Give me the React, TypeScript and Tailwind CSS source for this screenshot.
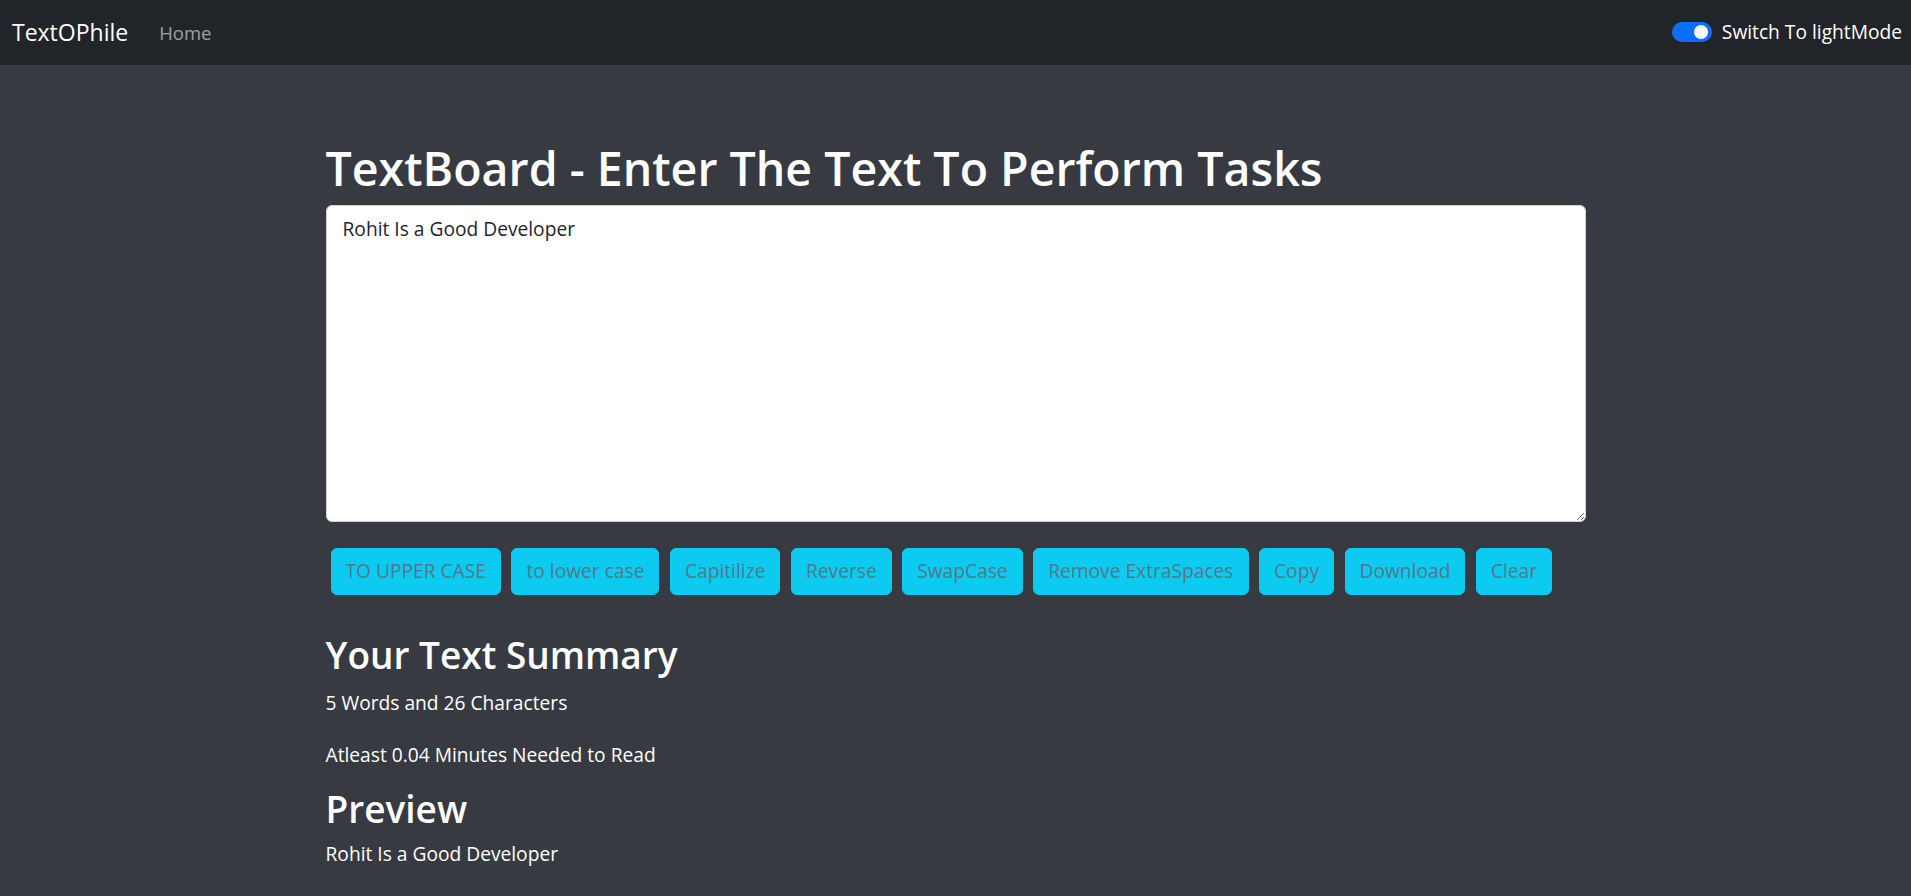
import { useState } from "react";

const BUTTONS = [
  "TO UPPER CASE",
  "to lower case",
  "Capitilize",
  "Reverse",
  "SwapCase",
  "Remove ExtraSpaces",
  "Copy",
  "Download",
  "Clear",
];

function Navbar() {
  return (
    <nav className="flex h-[65px] items-center justify-between bg-[#212529] pl-[12px] pr-[9px]">
      <div className="flex items-center">
        <span className="text-[23px] text-white">TextOPhile</span>
        <a className="ml-[31px] text-[18.5px] text-white/55" href="#">
          Home
        </a>
      </div>
      <div className="flex items-center gap-[10px]">
        <span className="relative h-[20px] w-[40px] rounded-full bg-[#0d6efd]">
          <span className="absolute right-[4px] top-[3px] h-[14px] w-[14px] rounded-full bg-white" />
        </span>
        <span className="text-[19.2px] text-white">Switch To lightMode</span>
      </div>
    </nav>
  );
}

export default function App() {
  const [text, setText] = useState("Rohit Is a Good Developer");

  return (
    <div
      className="min-h-[896px] bg-[#373a40] text-white"
      style={{ fontFamily: '"Open Sans", "Noto Sans", sans-serif' }}
    >
      <Navbar />
      <main className="mx-auto w-[1260px] pt-[76px]">
        <h1 className="mb-[8px] text-[46.5px] font-semibold leading-[1.2]">
          TextBoard - Enter The Text To Perform Tasks
        </h1>
        <textarea
          value={text}
          onChange={(e) => setText(e.target.value)}
          className="block h-[317px] w-full rounded-[6px] border border-[#ced4da] bg-white px-[16px] py-[9px] text-[19.2px] leading-[1.5] text-[#212529] outline-none"
        />
        <div className="mt-[26px] flex flex-wrap gap-[10.5px] pl-[5px]">
          {BUTTONS.map((b) => (
            <button
              key={b}
              className="h-[47px] rounded-[6px] border border-[#0dcaf0] bg-[#0dcaf0] px-[14px] text-[19.2px] leading-[1.5] text-[#55778a]"
            >
              {b}
            </button>
          ))}
        </div>

        <section className="mt-[38px]">
          <h2 className="mb-[12px] text-[37px] font-semibold leading-[1.2]">Your Text Summary</h2>
          <p className="mb-[23px] text-[19.2px] leading-[1.5]">5 Words and 26 Characters</p>
          <p className="mb-[17px] text-[19.2px] leading-[1.5]">Atleast 0.04 Minutes Needed to Read</p>
          <h2 className="mb-[9px] text-[37px] font-semibold leading-[1.2]">Preview</h2>
          <p className="text-[19.2px] leading-[1.5]">{text}</p>
        </section>
      </main>
    </div>
  );
}
